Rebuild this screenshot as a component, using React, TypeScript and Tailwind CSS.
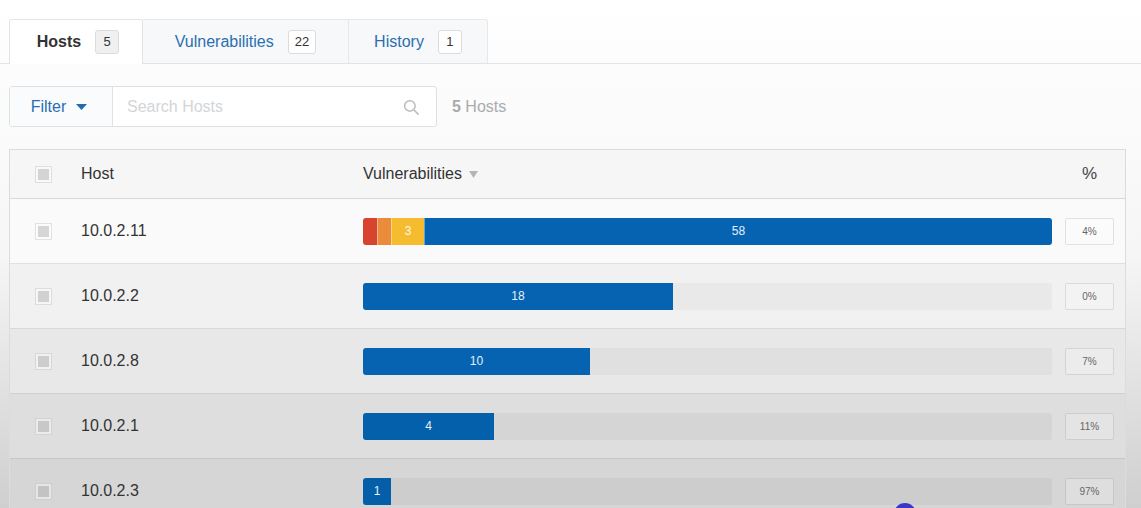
import React from 'react';

type Seg = { color: string; width: number; label?: string };
type HostRow = { host: string; segs: Seg[]; pct: string; bg: string; track: string };

const rows: HostRow[] = [
  {
    host: '10.0.2.11',
    segs: [
      { color: 'bg-[#d8432f]', width: 14 },
      { color: 'bg-[#ea8c3c]', width: 14 },
      { color: 'bg-[#f5bc2f]', width: 33, label: '3' },
      { color: 'bg-[#0563b1]', width: 628, label: '58' }
    ],
    pct: '4%',
    bg: 'bg-[#fafafa]',
    track: 'bg-[#f2f2f2]'
  },
  {
    host: '10.0.2.2',
    segs: [{ color: 'bg-[#0563b1]', width: 310, label: '18' }],
    pct: '0%',
    bg: 'bg-[#f1f1f1]',
    track: 'bg-[#e9e9e9]'
  },
  {
    host: '10.0.2.8',
    segs: [{ color: 'bg-[#0563b1]', width: 227, label: '10' }],
    pct: '7%',
    bg: 'bg-[#e8e8e8]',
    track: 'bg-[#e0e0e0]'
  },
  {
    host: '10.0.2.1',
    segs: [{ color: 'bg-[#0560ab]', width: 131, label: '4' }],
    pct: '11%',
    bg: 'bg-[#dedede]',
    track: 'bg-[#d5d5d5]'
  },
  {
    host: '10.0.2.3',
    segs: [{ color: 'bg-[#055ea8]', width: 28, label: '1' }],
    pct: '97%',
    bg: 'bg-[#d6d6d6]',
    track: 'bg-[#cdcdcd]'
  }
];

const Checkbox = () => (
  <div className="w-[17px] h-[17px] border border-black/10 bg-white/40 flex items-center justify-center">
    <div className="w-[11px] h-[11px] bg-black/15" />
  </div>
);

const Badge = ({ n, gray }: { n: string; gray?: boolean }) => (
  <span
    className={`ml-[14px] inline-flex items-center justify-center h-[24px] min-w-[24px] px-[6px] rounded-[3px] border border-[#dcdcdc] text-[13px] text-[#333] font-normal ${
      gray ? 'bg-[#f0f0f0]' : 'bg-white'
    }`}
  >
    {n}
  </span>
);

export default function App() {
  return (
    <div
      className="relative w-[1141px] h-[508px] overflow-hidden bg-linear-to-b from-white via-[#f6f6f6] to-[#cfcfcf] text-[#333]"
      style={{ fontFamily: '"Liberation Sans", Arial, sans-serif' }}
    >
      {/* tabs */}
      <div className="pt-[19px] pl-[9px] flex items-end border-b border-[#e2e4e6]">
        <div className="h-[45px] w-[134px] pl-[4px] flex items-center justify-center bg-white border border-b-0 border-[#e2e4e6] rounded-t-[3px] -mb-px">
          <span className="text-[16px] font-bold text-[#333]">Hosts</span>
          <Badge n="5" gray />
        </div>
        <div className="h-[44px] w-[206px] flex items-center justify-center bg-[#f7f8fa] border-t border-r border-[#e6e8ea]">
          <span className="text-[16px] text-[#2a6faf]">Vulnerabilities</span>
          <Badge n="22" />
        </div>
        <div className="h-[44px] w-[139px] flex items-center justify-center bg-[#f7f8fa] border-t border-r border-[#e6e8ea] rounded-tr-[3px]">
          <span className="text-[16px] text-[#2a6faf]">History</span>
          <Badge n="1" />
        </div>
      </div>

      {/* filter bar */}
      <div className="mt-[22px] ml-[9px] flex items-center">
        <div className="flex h-[41px] w-[428px] border border-[#dfe1e3] rounded-[3px] bg-white">
          <button className="w-[103px] pr-[4px] flex items-center justify-center gap-[10px] border-r border-[#dfe1e3] bg-[#fafbfc] text-[16px] text-[#2a6faf]">
            Filter
            <svg width="11" height="6" viewBox="0 0 11 6">
              <path d="M0 0h11L5.5 6z" fill="#1f6cb0" />
            </svg>
          </button>
          <div className="flex-1 flex items-center pl-[14px] pr-[16px]">
            <span className="flex-1 text-[16px] text-[#d3d5d8]">Search Hosts</span>
            <svg width="18" height="18" viewBox="0 0 24 24" fill="none" stroke="#b8bbbe" strokeWidth="2" strokeLinecap="round">
              <circle cx="10.5" cy="10.5" r="7" />
              <path d="M16 16l5.5 5.5" />
            </svg>
          </div>
        </div>
        <span className="ml-[15px] text-[16px] text-[#a9abad]">
          <span className="font-bold">5</span> Hosts
        </span>
      </div>

      {/* table */}
      <div className="mt-[22px] ml-[9px] w-[1117px] border border-[#dcdcdc] border-b-0">
        <div className="h-[49px] flex items-center bg-[#f6f6f6] border-b border-[#d9d9d9]">
          <div className="w-[71px] pl-[25px]">
            <Checkbox />
          </div>
          <div className="w-[282px] text-[16px] text-[#333]">Host</div>
          <div className="w-[689px] flex items-center text-[16px] text-[#333]">
            Vulnerabilities
            <svg className="ml-[7px]" width="9" height="7" viewBox="0 0 9 7">
              <path d="M0 0h9L4.5 7z" fill="#b5b5b5" />
            </svg>
          </div>
          <div className="ml-[13px] w-[49px] text-center text-[17px] text-[#444]">%</div>
        </div>
        {rows.map((r) => (
          <div key={r.host} className={`h-[65px] flex items-center border-b border-black/10 ${r.bg}`}>
            <div className="w-[71px] pl-[25px]">
              <Checkbox />
            </div>
            <div className="w-[282px] text-[16px] text-[#333]">{r.host}</div>
            <div className={`w-[689px] h-[27px] flex rounded-[3px] overflow-hidden ${r.track}`}>
              {r.segs.map((s, i) => (
                <div
                  key={i}
                  className={`${s.color} h-full flex items-center justify-center text-[12px] text-white/90 ${
                    i > 0 ? 'border-l border-white/40' : ''
                  }`}
                  style={{ width: s.width }}
                >
                  {s.label}
                </div>
              ))}
            </div>
            <div className="ml-[13px] w-[49px] h-[27px] flex items-center justify-center border border-black/10 bg-white/20 rounded-[2px] text-[10px] text-[#666]">
              {r.pct}
            </div>
          </div>
        ))}
      </div>

      {/* cursor dot peeking at the bottom */}
      <div className="absolute left-[894px] top-[503px] w-[22px] h-[22px] rounded-full bg-[#3a36c9]" />
    </div>
  );
}
